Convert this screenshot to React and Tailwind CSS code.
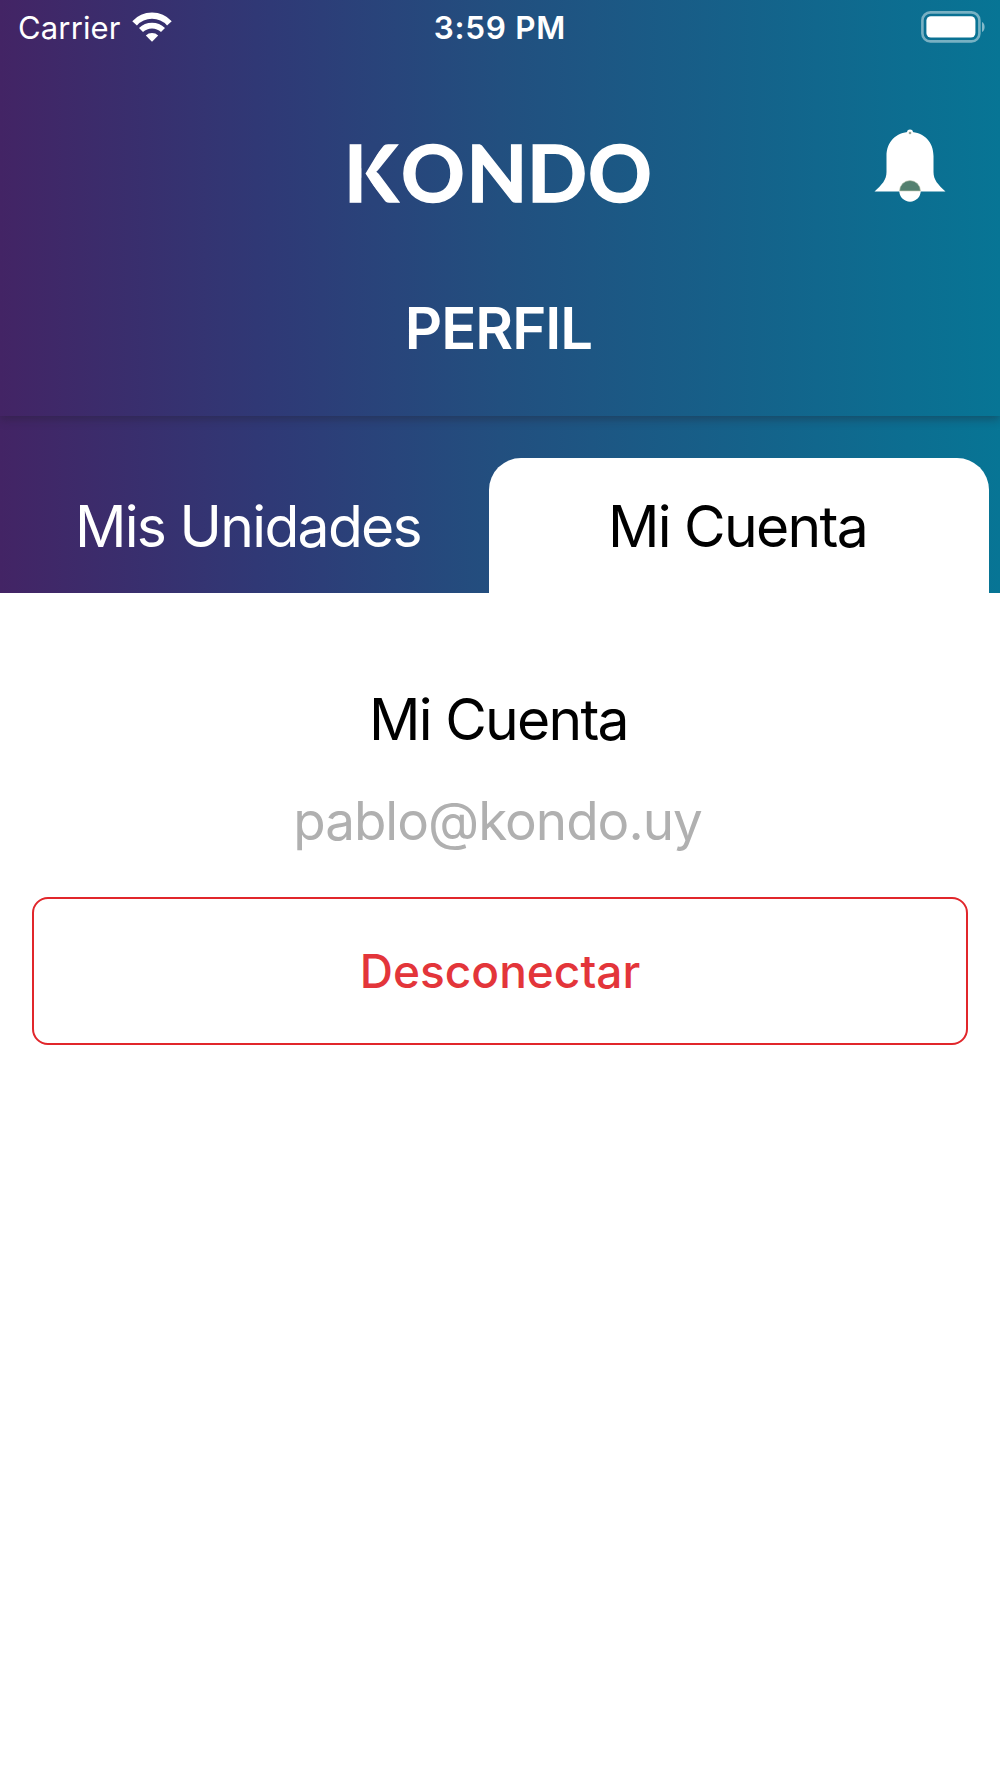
function StatusBar() {
  return (
    <div className="grid h-[54px] grid-cols-3 items-center pl-[18px] pr-[15px]">
      <div className="flex items-center gap-[11px]">
        <span className="text-[31px] leading-none tracking-[0.15px]">Carrier</span>
        <svg viewBox="0 0 40 30" className="h-[30px] w-10" fill="none" stroke="currentColor">
          <path d="M2.600 11.300a23.500 23.500 0 0 1 34.800 0" strokeWidth="6.300" />
          <path d="M9 18a16 16 0 0 1 22 0" strokeWidth="5.800" />
          <path d="M20 29.800l-6.200-6.400a9 9 0 0 1 12.400 0z" fill="currentColor" stroke="none" />
        </svg>
      </div>
      <span className="pr-[3px] pt-0.5 text-center text-[31.5px] font-semibold leading-none tracking-[0.7px]">3:59 PM</span>
      <svg viewBox="0 0 64 32" className="h-8 w-16 justify-self-end" fill="none">
        <rect x="1.4" y="1.4" width="57" height="29" rx="8" stroke="white" strokeOpacity="0.45" strokeWidth="2.6" />
        <rect x="5.4" y="5.200" width="49" height="21.300" rx="4.5" fill="white" />
        <path d="M61 11c3.5 1.5 3.5 8.500 0 10z" fill="white" fillOpacity="0.5" />
      </svg>
    </div>
  );
}

function Logo() {
  return (
    <svg viewBox="0 0 304 64" className="h-16 w-[304px] overflow-visible">
      <text
        x="-4 53 118.500 179 240"
        y="60"
        fill="white"
        stroke="white"
        strokeWidth="1.4"
        className="font-['Lato',sans-serif] text-[79px] font-bold"
      >
        KONDO
      </text>
      {/* separates the stem of the K from its arms */}
      <path d="M13.500 1H36L17.500 31.500 37 62H13.500z" fill="#29437a" />
    </svg>
  );
}

function BellIcon() {
  return (
    <svg viewBox="0 0 72 74" className="h-[74px] w-[72px]">
      <circle cx="36" cy="3.500" r="3" fill="white" />
      <path d="M36 3C22 3 12.500 13 12.500 27v16c0 8-4.500 12.500-12 19.500h71c-7.500-7-12-11.500-12-19.500V27C59.500 13 50 3 36 3z" fill="white" />
      <circle cx="36" cy="4" r="1.300" fill="#9aa79a" />
      <circle cx="36" cy="62" r="10.700" fill="white" />
      <path d="M25.500 62a10.500 10.500 0 0 1 21 0z" fill="#54806f" stroke="#c9cfb8" strokeWidth="0.600" />
    </svg>
  );
}

export default function App() {
  return (
    <div className="min-h-[1778px] w-[1000px] bg-white font-['Inter',sans-serif] text-black">
      <div className="h-[593px] bg-[linear-gradient(90deg,#432465_0%,#2f3976_27%,#224f7f_50%,#077595_100%)] text-white">
        <header className="h-[416px] shadow-[0_3px_9px_rgba(35,30,45,0.4)]">
          <StatusBar />
          <div className="grid h-[162px] grid-cols-[1fr_304px_1fr] px-[54px] pt-[75px]">
            <div />
            <div className="pt-[13px]"><Logo /></div>
            <div className="justify-self-end"><BellIcon /></div>
          </div>
          <h1 className="pr-[3px] pt-[76px] text-center text-[58px] font-semibold leading-[72px] tracking-[-1px]">PERFIL</h1>
        </header>

        <nav className="flex h-[177px] pl-[10px] pr-[11px] pt-[42px] text-[57px] tracking-[-1.7px]">
          <button className="flex w-[479px] items-center justify-center pr-[3px] pt-0.5">Mis Unidades</button>
          <button className="flex w-[500px] shrink-0 items-center justify-center rounded-t-[32px] bg-white pr-[3px] pt-0.5 text-black">Mi Cuenta</button>
        </nav>
      </div>

      <main className="flex flex-col items-center px-8 pt-[91px]">
        <h2 className="pr-[3px] text-[57px] leading-[72px] tracking-[-1.75px]">Mi Cuenta</h2>
        <p className="mt-[29px] pr-[5px] text-[53px] leading-[72px] tracking-[-1px] text-[#b0b0b0]">pablo@kondo.uy</p>
        <button className="mt-[40px] h-[148px] w-full rounded-[16px] border-2 border-[#e1262b] text-[46px] font-medium text-[#e3353a]">
          Desconectar
        </button>
      </main>
    </div>
  );
}
